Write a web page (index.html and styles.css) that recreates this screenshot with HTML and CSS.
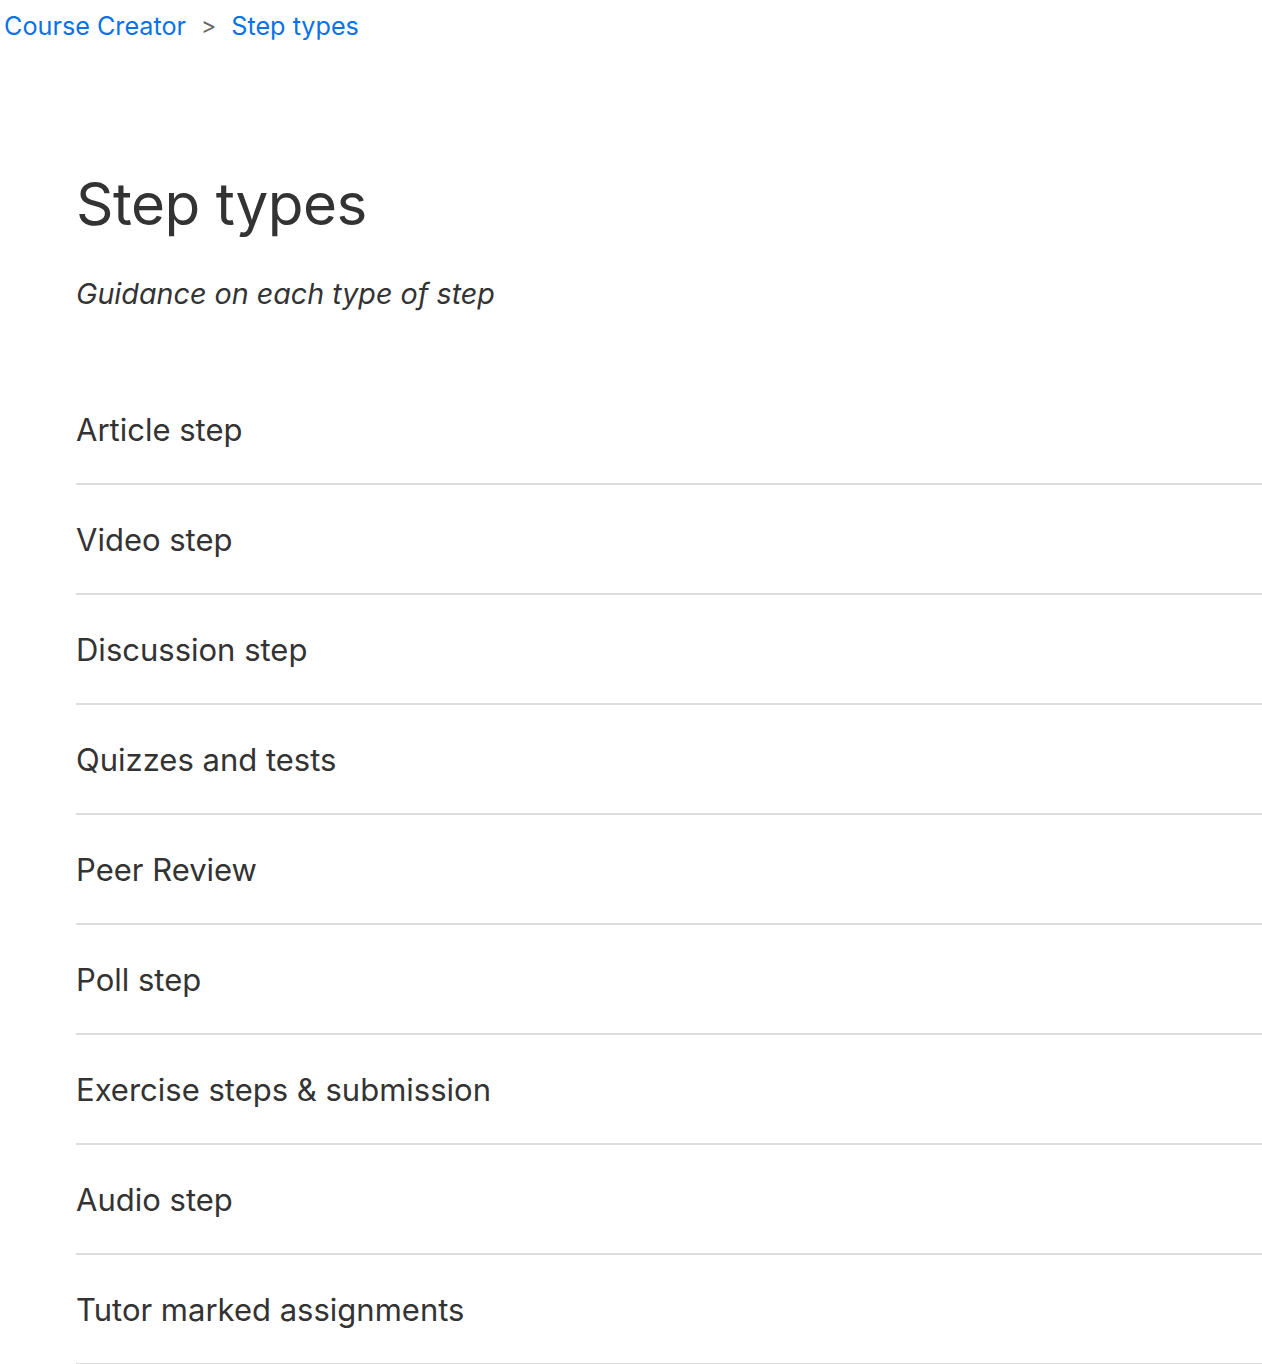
FILE: index.html
```html
<!DOCTYPE html>
<html lang="en">
<head>
<meta charset="utf-8">
<title>Step types</title>
<link rel="stylesheet" href="styles.css">
</head>
<body>
<nav class="breadcrumb">
  <a href="#" class="crumb">Course Creator</a>
  <span class="sep">&gt;</span>
  <a href="#" class="crumb">Step types</a>
</nav>
<main class="content">
  <h1 class="title">Step types</h1>
  <p class="subtitle">Guidance on each type of step</p>
  <ul class="steps">
    <li class="step">Article step</li>
    <li class="step">Video step</li>
    <li class="step">Discussion step</li>
    <li class="step">Quizzes and tests</li>
    <li class="step">Peer Review</li>
    <li class="step">Poll step</li>
    <li class="step">Exercise steps &amp; submission</li>
    <li class="step">Audio step</li>
    <li class="step">Tutor marked assignments</li>
  </ul>
</main>
</body>
</html>
```
FILE: styles.css
```css
html, body {
  margin: 0;
  padding: 0;
  background: #fff;
}
body {
  font-family: Inter, "Liberation Sans", sans-serif;
  color: #333;
}
.breadcrumb {
  display: flex;
  align-items: center;
  gap: 15px;
  padding: 10px 0 0 4px;
  height: 32px;
  font-size: 25.2px;
}
.crumb {
  color: #0a72e6;
  text-decoration: none;
}
.sep {
  color: #666;
  font-size: 23px;
}
.content {
  padding-left: 76px;
}
.title {
  margin: 124px 0 0;
  font-size: 58.4px;
  font-weight: 400;
  line-height: 76px;
  letter-spacing: -0.5px;
}
.subtitle {
  margin: 34px 0 0;
  font-style: italic;
  font-size: 28.7px;
  line-height: 36px;
}
.steps {
  list-style: none;
  margin: 63px 0 0;
  padding: 0;
}
.step {
  height: 108px;
  display: flex;
  align-items: center;
  font-size: 31px;
  border-bottom: 2px solid #ddd;
}
```
